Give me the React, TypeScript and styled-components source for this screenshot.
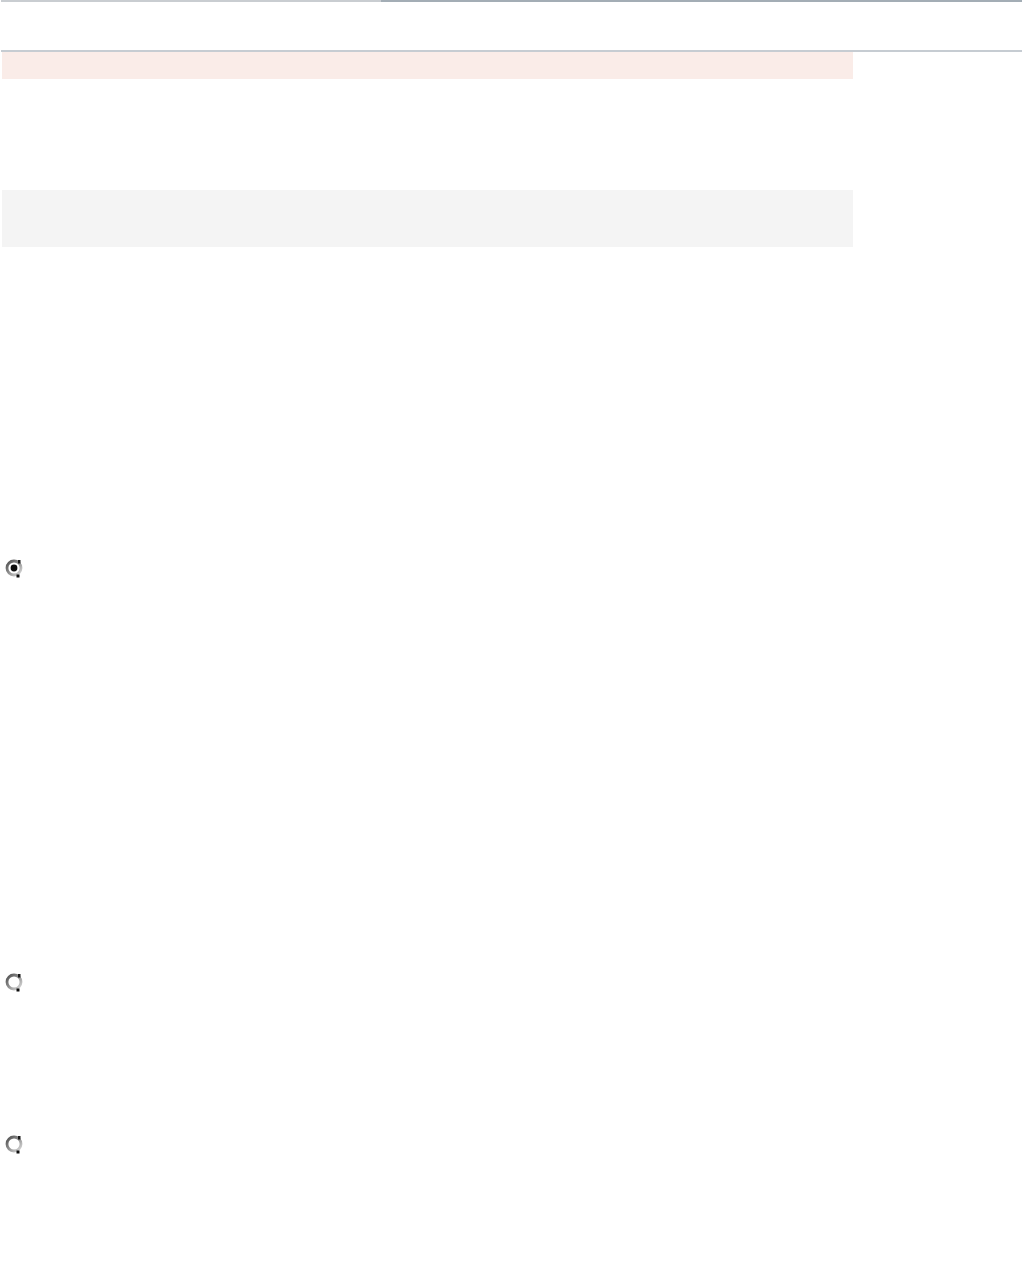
import React from "react";
import styled, { createGlobalStyle } from "styled-components";

const Global = createGlobalStyle`
  html, body { margin: 0; padding: 0; background: #ffffff; }
  body { font-family: "Liberation Sans", Arial, sans-serif; font-size: 13px; color: #222; }
`;

const Page = styled.div`
  width: 1023px;
  min-height: 1279px;
  display: flex;
  flex-direction: column;
  padding-left: 1px;
  box-sizing: border-box;
`;

const TopRule = styled.div`
  width: 1021px;
  height: 2px;
  display: grid;
  grid-template-columns: 380px 1fr;
`;

const RuleSegment = styled.div<{ $tone: string }>`
  background: ${(p) => p.$tone};
`;

const Header = styled.div`
  height: 48px;
`;

const HeaderRule = styled.div`
  width: 1021px;
  height: 2px;
  background: #c6ccd2;
`;

const Content = styled.div`
  width: 851px;
  margin-left: 1px;
  display: flex;
  flex-direction: column;
`;

const Notice = styled.div`
  height: 27px;
  background: #faece8;
`;

const InfoBox = styled.div`
  margin-top: 111px;
  height: 57px;
  background: #f4f4f4;
`;

const OptionRow = styled.label<{ $gap: number }>`
  display: flex;
  align-items: center;
  gap: 6px;
  margin-top: ${(p) => p.$gap}px;
  margin-left: 2px;
  height: 20px;
  cursor: pointer;
`;

const RadioIcon = ({ checked }: { checked?: boolean }) => (
  <svg width="20" height="20" viewBox="0 0 20 20">
    <defs>
      <linearGradient id={checked ? "rgc" : "rgu"} x1="0" y1="0" x2="1" y2="1">
        <stop offset="0" stopColor="#4e4e4e" />
        <stop offset="0.45" stopColor="#8c8c8c" />
        <stop offset="1" stopColor="#dcdcdc" />
      </linearGradient>
    </defs>
    <circle
      cx="10"
      cy="10"
      r="7"
      fill="#ffffff"
      stroke={`url(#${checked ? "rgc" : "rgu"})`}
      strokeWidth="2.8"
    />
    <rect x="14" y="2" width="2.5" height="3.5" fill="#1a1a1a" />
    <rect x="12.5" y="16.5" width="3" height="3" fill="#0d0d0d" />
    {checked && <circle cx="10" cy="10" r="3.4" fill="#0d0d0d" />}
  </svg>
);

const HiddenRadio = styled.input`
  position: absolute;
  opacity: 0;
  width: 0;
  height: 0;
  margin: 0;
`;

const OptionLabel = styled.span`
  font-size: 13px;
  color: #222;
`;

export default function App() {
  const [choice, setChoice] = React.useState("a");
  const options = [
    { id: "a", gap: 311 },
    { id: "b", gap: 394 },
    { id: "c", gap: 142 },
  ];
  return (
    <>
      <Global />
      <Page>
        <TopRule>
          <RuleSegment $tone="#c9cdd1" />
          <RuleSegment $tone="#a3adb5" />
        </TopRule>
        <Header />
        <HeaderRule />
        <Content>
          <Notice />
          <InfoBox />
          {options.map((o) => (
            <OptionRow key={o.id} $gap={o.gap}>
              <HiddenRadio
                type="radio"
                name="opt"
                checked={choice === o.id}
                onChange={() => setChoice(o.id)}
              />
              <RadioIcon checked={choice === o.id} />
              <OptionLabel />
            </OptionRow>
          ))}
        </Content>
      </Page>
    </>
  );
}
